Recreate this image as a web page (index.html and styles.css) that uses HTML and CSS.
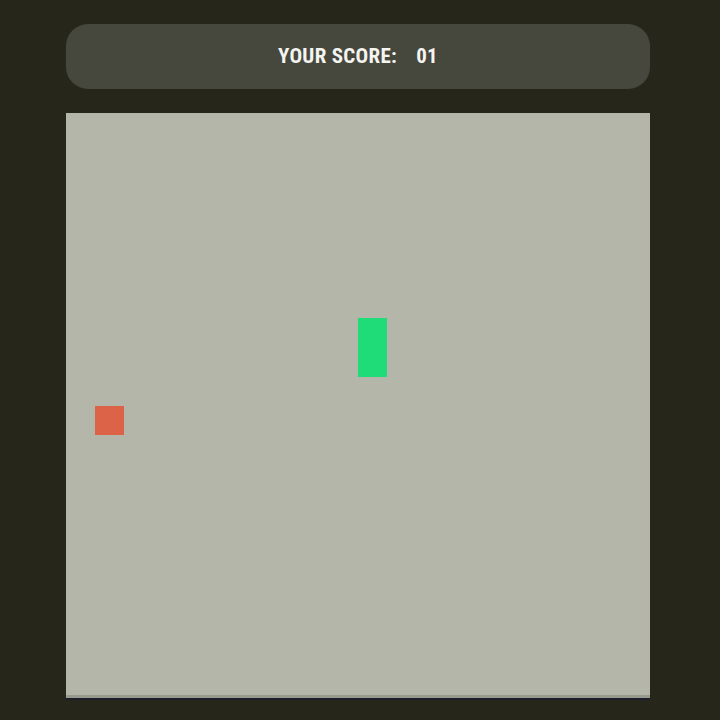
FILE: index.html
```html
<!DOCTYPE html>
<html>
<head>
<meta charset="utf-8">
<link rel="stylesheet" href="styles.css">
</head>
<body>
<div class="page">
  <header class="score-bar">
    <span class="score-label">YOUR SCORE:</span>
    <span class="score-value">01</span>
  </header>
  <main class="board">
    <div class="cell snake"></div>
    <div class="cell food"></div>
  </main>
</div>
</body>
</html>
```
FILE: styles.css
```css
html, body {
  margin: 0;
  padding: 0;
  background: #26271a;
}
.page {
  width: 720px;
  height: 720px;
  box-sizing: border-box;
  padding: 24px 0 0 66px;
  display: flex;
  flex-direction: column;
  gap: 24px;
}
.score-bar {
  width: 584px;
  height: 65px;
  border-radius: 22px;
  background: #46473d;
  display: flex;
  align-items: center;
  justify-content: center;
  gap: 19px;
  font-family: "Roboto Condensed", Roboto, sans-serif;
  font-weight: bold;
  font-size: 21px;
  line-height: 1;
  color: #f4f4f0;
  letter-spacing: 0.3px;
  padding: 0 0 1px 0;
  box-sizing: border-box;
}
.board {
  width: 584px;
  height: 582px;
  background: #b4b6aa;
  border-bottom: 3px solid #979b8e;
  box-shadow: 0 2px 0 #1c1e2c;
  display: grid;
  grid-template-columns: repeat(20, 29.2px);
  grid-template-rows: repeat(20, 29.3px);
}
.snake {
  grid-column: 11;
  grid-row: 8 / span 2;
  background: #20dc78;
}
.food {
  grid-column: 2;
  grid-row: 11;
  background: #dc6248;
}
```
